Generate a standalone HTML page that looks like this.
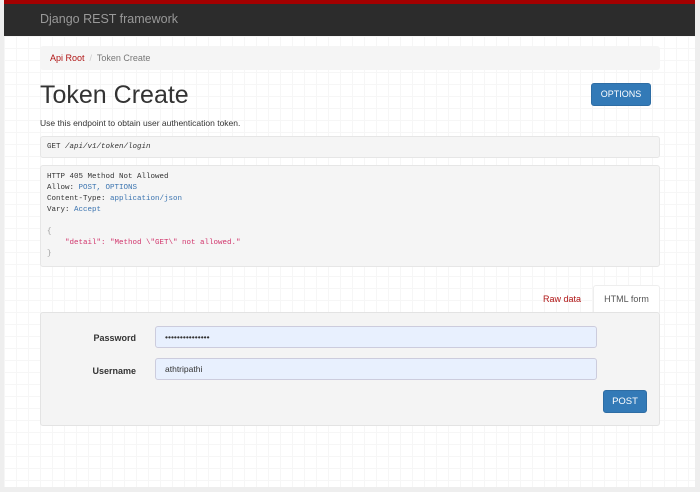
<!DOCTYPE html>
<html><head><style>
*{box-sizing:border-box;margin:0;padding:0}
html,body{width:700px;height:492px;overflow:hidden;background:#eee;font-family:"Liberation Sans",sans-serif}
#wrap{position:absolute;left:4px;top:0;width:691px;height:487px;background-color:#fff;
background-image:linear-gradient(#f6f6f6 1px,transparent 1px),linear-gradient(90deg,#f6f6f6 1px,transparent 1px);background-size:12px 12px}
#nav{position:absolute;left:0;top:0;width:691px;height:36px;background:#2c2c2c;border-top:4px solid #a30000}
#nav span{position:absolute;left:36px;top:8px;color:#999;font-size:12.5px}
.abs{position:absolute}
#bc{left:36px;top:46px;width:620px;height:24px;background:#f5f5f5;border-radius:3px;font-size:9px;color:#777;padding:7px 10px}
#bc a{color:#b01515}
h1{left:36px;top:81px;font-size:25px;font-weight:normal;color:#333}
.btn{background:#337ab7;border:1px solid #2e6da4;border-radius:3px;color:#fff;font-size:9px;text-align:center}
pre{font-family:"Liberation Mono",monospace;font-size:7.5px;background:#f5f5f5;border:1px solid #e6e6e6;border-radius:3px;color:#333;line-height:11px}
pre b{font-weight:normal}
.b{color:#3b74b0}.r{color:#d1356c}
label{position:absolute;font-size:9px;font-weight:bold;color:#333;text-align:right;width:95px}
.in{position:absolute;left:114px;width:442px;height:22px;background:#e8f0fe;border:1px solid #ccd;border-radius:3px;font-size:8.5px;padding:5px 9px;color:#333}
</style></head><body>
<div id="wrap">
<div id="nav"><span>Django REST framework</span></div>
<div id="bc" class="abs"><a>Api Root</a> &nbsp;<span style="color:#ccc">/</span>&nbsp; Token Create</div>
<h1 class="abs">Token Create</h1>
<div class="abs btn" style="left:587px;top:83px;width:60px;height:23px;line-height:21px">OPTIONS</div>
<div class="abs" style="left:36px;top:118px;font-size:8.5px;color:#333">Use this endpoint to obtain user authentication token.</div>
<pre class="abs" style="left:36px;top:136px;width:620px;height:22px;padding:5px 6px"><b>GET</b> <i>/api/v1/token/login</i></pre>
<pre class="abs" style="left:36px;top:165px;width:620px;height:102px;padding:6px 6px"><b>HTTP 405 Method Not Allowed
Allow:</b> <span class="b">POST, OPTIONS</span>
<b>Content-Type:</b> <span class="b">application/json</span>
<b>Vary:</b> <span class="b">Accept</span>

<span style="color:#999">{</span>
    <span class="r">"detail": "Method \"GET\" not allowed."</span>
<span style="color:#999">}</span></pre>
<div class="abs" style="left:539px;top:294px;font-size:9px;color:#b01515">Raw data</div>
<div class="abs" style="left:589px;top:285px;width:67px;height:28px;background:#fff;border:1px solid #eee;border-bottom:none;border-radius:3px 3px 0 0;font-size:9px;color:#555;text-align:center;line-height:27px">HTML form</div>
<div class="abs" style="left:36px;top:312px;width:620px;height:114px;background:#f4f4f4;border:1px solid #e3e3e3;border-radius:3px">
<label style="left:0;top:20px">Password</label>
<div class="in" style="top:13px">•••••••••••••••</div>
<label style="left:0;top:53px">Username</label>
<div class="in" style="top:45px">athtripathi</div>
<div class="btn abs" style="left:562px;top:77px;width:44px;height:23px;line-height:21px;font-size:9.5px">POST</div>
</div>
</div>
</body></html>
